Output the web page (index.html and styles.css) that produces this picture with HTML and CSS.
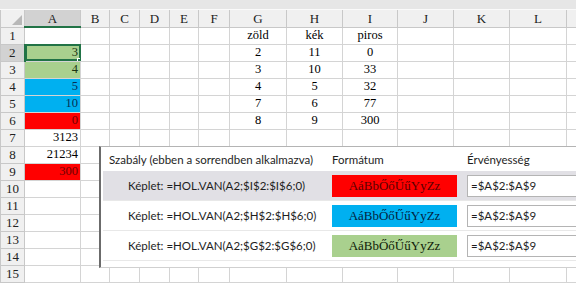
FILE: index.html
```html
<!DOCTYPE html>
<html lang="hu">
<head>
    <meta charset="UTF-8">
    <title>Feltételes formázás</title>
    <link rel="stylesheet" href="styles.css">
</head>
<body>
    <div class="sheet">
        <div class="ribbon-edge"></div>
        <table class="grid">
            <colgroup>
                <col class="c-hdr"><col class="c-a"><col class="c-b"><col class="c-c"><col class="c-d"><col class="c-e"><col class="c-f">
                <col class="c-g"><col class="c-h"><col class="c-i"><col class="c-j"><col class="c-k"><col class="c-l"><col class="c-m">
            </colgroup>
            <thead>
                <tr>
                    <th class="corner"><span class="corner-tri"></span></th>
                    <th class="sel-col">A</th><th>B</th><th>C</th><th>D</th><th>E</th><th>F</th>
                    <th>G</th><th>H</th><th>I</th><th>J</th><th>K</th><th>L</th><th></th>
                </tr>
            </thead>
            <tbody>
                <tr><th>1</th><td></td><td></td><td></td><td></td><td></td><td></td><td class="mid">zöld</td><td class="mid">kék</td><td class="mid">piros</td><td></td><td></td><td></td><td></td></tr>
                <tr><th class="sel-row">2</th><td class="num green active">3<span class="handle"></span></td><td></td><td></td><td></td><td></td><td></td><td class="mid">2</td><td class="mid">11</td><td class="mid">0</td><td></td><td></td><td></td><td></td></tr>
                <tr><th>3</th><td class="num green">4</td><td></td><td></td><td></td><td></td><td></td><td class="mid">3</td><td class="mid">10</td><td class="mid">33</td><td></td><td></td><td></td><td></td></tr>
                <tr><th>4</th><td class="num blue">5</td><td></td><td></td><td></td><td></td><td></td><td class="mid">4</td><td class="mid">5</td><td class="mid">32</td><td></td><td></td><td></td><td></td></tr>
                <tr><th>5</th><td class="num blue">10</td><td></td><td></td><td></td><td></td><td></td><td class="mid">7</td><td class="mid">6</td><td class="mid">77</td><td></td><td></td><td></td><td></td></tr>
                <tr><th>6</th><td class="num red">0</td><td></td><td></td><td></td><td></td><td></td><td class="mid">8</td><td class="mid">9</td><td class="mid">300</td><td></td><td></td><td></td><td></td></tr>
                <tr><th>7</th><td class="num">3123</td><td></td><td></td><td></td><td></td><td></td><td></td><td></td><td></td><td></td><td></td><td></td><td></td></tr>
                <tr><th>8</th><td class="num">21234</td><td></td><td></td><td></td><td></td><td></td><td></td><td></td><td></td><td></td><td></td><td></td><td></td></tr>
                <tr><th>9</th><td class="num red">300</td><td></td><td></td><td></td><td></td><td></td><td></td><td></td><td></td><td></td><td></td><td></td><td></td></tr>
                <tr><th>10</th><td></td><td></td><td></td><td></td><td></td><td></td><td></td><td></td><td></td><td></td><td></td><td></td><td></td></tr>
                <tr><th>11</th><td></td><td></td><td></td><td></td><td></td><td></td><td></td><td></td><td></td><td></td><td></td><td></td><td></td></tr>
                <tr><th>12</th><td></td><td></td><td></td><td></td><td></td><td></td><td></td><td></td><td></td><td></td><td></td><td></td><td></td></tr>
                <tr><th>13</th><td></td><td></td><td></td><td></td><td></td><td></td><td></td><td></td><td></td><td></td><td></td><td></td><td></td></tr>
                <tr><th>14</th><td></td><td></td><td></td><td></td><td></td><td></td><td></td><td></td><td></td><td></td><td></td><td></td><td></td></tr>
                <tr><th>15</th><td></td><td></td><td></td><td></td><td></td><td></td><td></td><td></td><td></td><td></td><td></td><td></td><td></td></tr>
            </tbody>
        </table>

        <div class="rules">
            <div class="rules-head">
                <div class="col-rule">Szabály (ebben a sorrendben alkalmazva)</div>
                <div class="col-format">Formátum</div>
                <div class="col-range">Érvényesség</div>
            </div>
            <div class="rule selected">
                <div class="col-rule formula">Képlet: =HOL.VAN(A2;$I$2:$I$6;0)</div>
                <div class="col-format"><div class="swatch sw-red">AáBbŐőŰűYyZz</div></div>
                <div class="col-range"><div class="range-box">=$A$2:$A$9</div></div>
            </div>
            <div class="rule">
                <div class="col-rule formula">Képlet: =HOL.VAN(A2;$H$2:$H$6;0)</div>
                <div class="col-format"><div class="swatch sw-blue">AáBbŐőŰűYyZz</div></div>
                <div class="col-range"><div class="range-box">=$A$2:$A$9</div></div>
            </div>
            <div class="rule">
                <div class="col-rule formula">Képlet: =HOL.VAN(A2;$G$2:$G$6;0)</div>
                <div class="col-format"><div class="swatch sw-green">AáBbŐőŰűYyZz</div></div>
                <div class="col-range"><div class="range-box">=$A$2:$A$9</div></div>
            </div>
        </div>
    </div>
</body>
</html>
```

FILE: styles.css
```css
:root {
    --grid-line: #d4d4d4;
    --hdr-bg: #f0f0f0;
    --hdr-sel: #d2d2d2;
    --excel-green: #217346;
    --fill-green: #a9d08e;
    --fill-blue: #00b0f0;
    --fill-red: #ff0000;
}

* {
    box-sizing: border-box;
    margin: 0;
    padding: 0;
}

body {
    width: 576px;
    height: 284px;
    overflow: hidden;
    background: #ffffff;
    font-family: 'Liberation Serif', 'Times New Roman', serif;
    color: #000;
}

.sheet {
    position: relative;
    width: 576px;
    height: 284px;
}

.ribbon-edge {
    height: 10px;
    background: #e6e6e6;
    border-bottom: 1px solid #fafafa;
}

.grid {
    border-collapse: collapse;
    table-layout: fixed;
    width: 600px;
    font-size: 12.5px;
}

.c-hdr { width: 24px; }
.c-a { width: 56px; }
.c-b { width: 29px; }
.c-c { width: 30px; }
.c-d { width: 30px; }
.c-e { width: 29px; }
.c-f { width: 31px; }
.c-g { width: 57px; }
.c-h { width: 56px; }
.c-i { width: 55px; }
.c-j { width: 56px; }
.c-k { width: 56px; }
.c-l { width: 57px; }
.c-m { width: 34px; }

.grid th,
.grid td {
    height: 17px;
    border: 1px solid var(--grid-line);
    line-height: 15px;
    padding: 0 2px;
    white-space: nowrap;
    overflow: hidden;
}

.grid thead th {
    background: var(--hdr-bg);
    font-weight: normal;
    font-size: 13px;
    color: #222;
    border-color: #c8c8c8;
    border-top: none;
}

.grid thead th.sel-col {
    background: var(--hdr-sel);
    border-bottom: 2px solid var(--excel-green);
}

.corner {
    position: relative;
}

.corner-tri {
    position: absolute;
    right: 2px;
    bottom: 2px;
    width: 0;
    height: 0;
    border-left: 10px solid transparent;
    border-bottom: 10px solid #b8b8b8;
}

.grid tbody th {
    background: var(--hdr-bg);
    font-weight: normal;
    font-size: 13px;
    color: #222;
    text-align: center;
    border-color: #c8c8c8;
    padding: 0;
}

.grid tbody th.sel-row {
    background: var(--hdr-sel);
    border-right: 2px solid var(--excel-green);
}

.num { text-align: right; }
.mid { text-align: center; }

.green { background: var(--fill-green); color: #1a3310; }
.blue { background: var(--fill-blue); color: #062e55; }
.red { background: var(--fill-red); color: #6e0000; }

.active {
    position: relative;
    outline: 2px solid var(--excel-green);
    outline-offset: -2px;
}

.handle {
    position: absolute;
    right: -3px;
    bottom: -3px;
    width: 6px;
    height: 6px;
    background: var(--excel-green);
    border: 1px solid #fff;
}

/* dialog panel lying over the sheet */
.rules {
    position: absolute;
    left: 99px;
    top: 146px;
    width: 477px;
    height: 122px;
    background: #ffffff;
    border-left: 2px solid #6b6b6b;
    border-top: 1px solid #b4b4b4;
    border-bottom: 1px solid #d0d0d0;
    font-family: 'Lato', 'Noto Sans', sans-serif;
    font-size: 11.5px;
    color: #1e1e1e;
    padding-left: 2px;
    white-space: nowrap;
}

.rules-head,
.rule {
    display: flex;
    align-items: center;
}

.rules-head {
    height: 24px;
    padding-top: 1px;
}

.rule {
    height: 30px;
    border-bottom: 1px solid #e8e8e8;
}

.rule.selected {
    background: #e1e0e5;
}

.col-rule {
    width: 223px;
    padding-left: 6px;
    flex-shrink: 0;
}

.col-rule.formula {
    padding-left: 25px;
}

.col-format {
    width: 135px;
    padding-left: 6px;
    flex-shrink: 0;
}

.col-range {
    flex: 1;
    padding-left: 6px;
}

.swatch {
    width: 125px;
    height: 22px;
    line-height: 22px;
    text-align: center;
    font-family: 'Liberation Serif', 'Times New Roman', serif;
    font-size: 13px;
}

.sw-red { background: var(--fill-red); color: #5a0000; }
.sw-blue { background: var(--fill-blue); color: #03233f; }
.sw-green { background: var(--fill-green); color: #102008; }

.range-box {
    height: 22px;
    line-height: 20px;
    border: 1px solid #b4b4b4;
    border-right: none;
    background: #ffffff;
    padding-left: 3px;
}
```
